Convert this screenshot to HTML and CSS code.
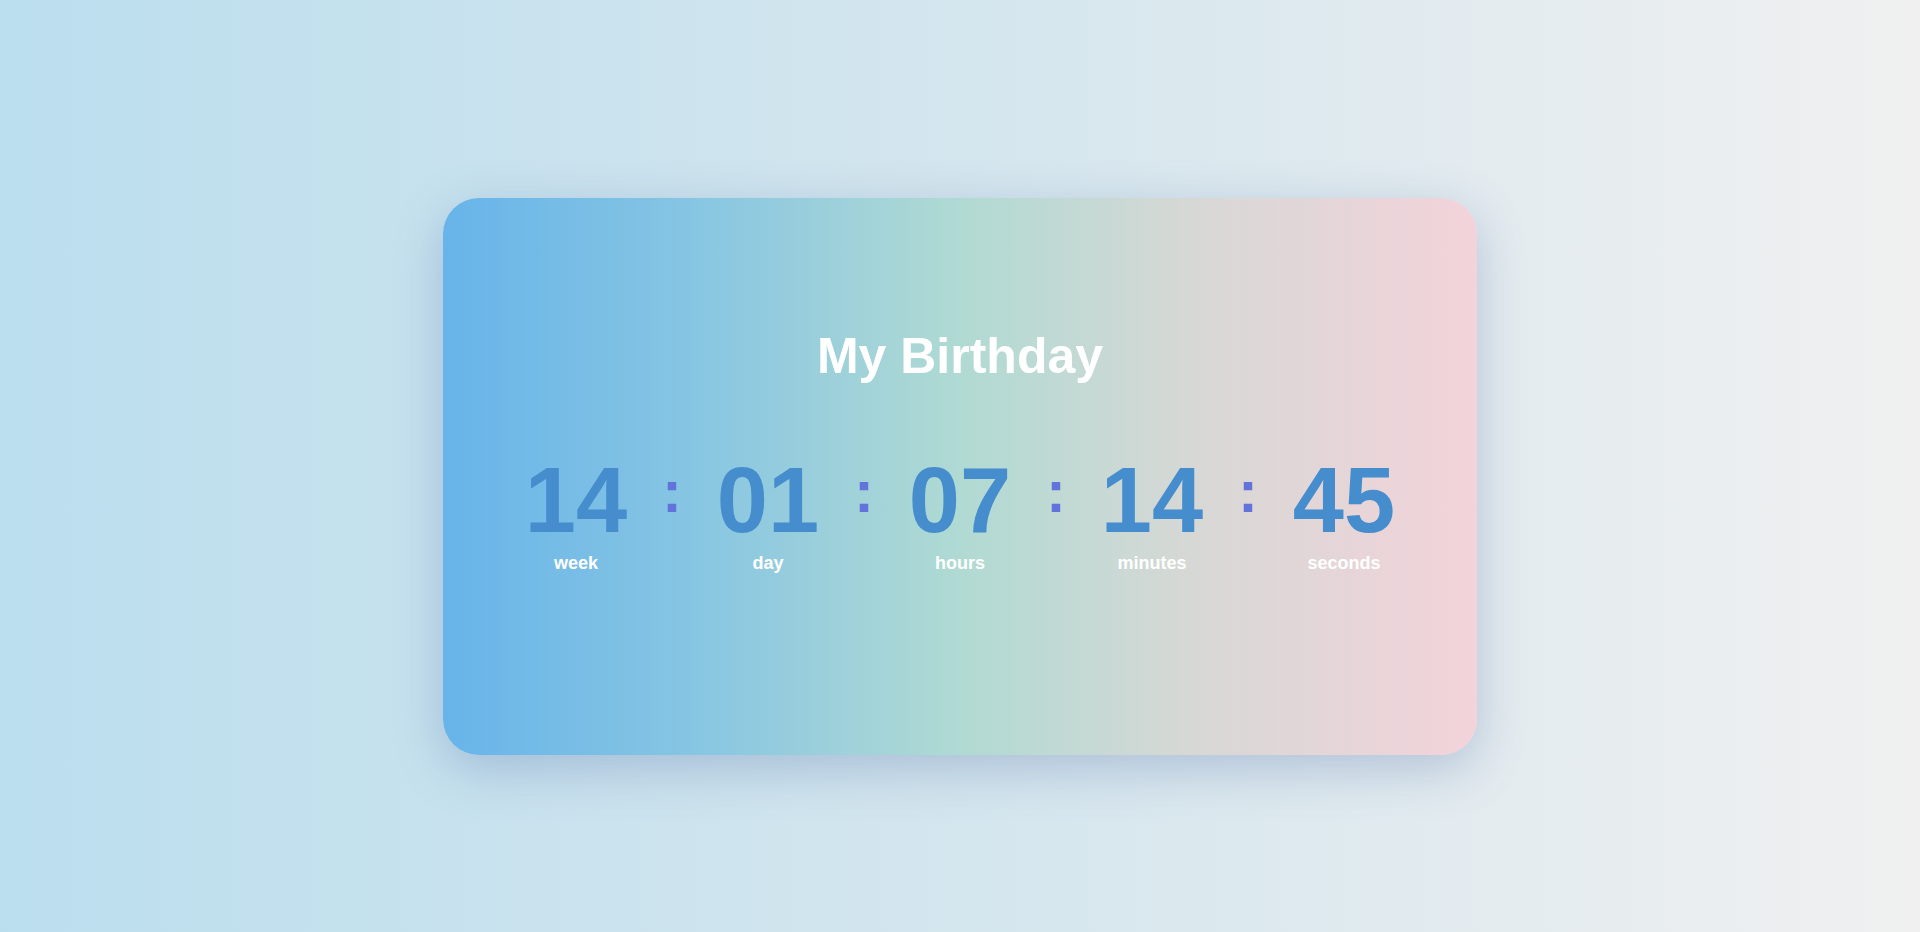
FILE: index.html
```html
<!DOCTYPE html>
<html lang="en">
<head>
<meta charset="utf-8">
<title>My Birthday</title>
<link rel="stylesheet" href="styles.css">
</head>
<body>
<main class="page">
  <section class="card">
    <h1 class="title">My Birthday</h1>
    <div class="timer">
      <div class="unit"><span class="num">14</span><span class="label">week</span></div>
      <div class="sep">:</div>
      <div class="unit"><span class="num">01</span><span class="label">day</span></div>
      <div class="sep">:</div>
      <div class="unit"><span class="num">07</span><span class="label">hours</span></div>
      <div class="sep">:</div>
      <div class="unit"><span class="num">14</span><span class="label">minutes</span></div>
      <div class="sep">:</div>
      <div class="unit"><span class="num">45</span><span class="label">seconds</span></div>
    </div>
  </section>
</main>
</body>
</html>
```

FILE: styles.css
```css
* { box-sizing: border-box; }
html, body { margin: 0; padding: 0; }
body {
  font-family: "Liberation Sans", Arial, sans-serif;
  background: linear-gradient(to right, #bbdeee 0%, #d4e6ee 50%, #f0f0f0 100%);
  min-height: 100vh;
}
.page {
  min-height: 100vh;
  display: flex;
  align-items: center;
  justify-content: center;
  padding-top: 21px;
}
.card {
  width: 1034px;
  height: 557px;
  border-radius: 36px;
  background: linear-gradient(to right, #67b4ea 0%, #88c6e2 25%, #b0dad3 50%, #d6d8d5 72%, #f3d3da 100%);
  box-shadow: 0 14px 50px rgba(80, 110, 165, 0.32);
  padding-top: 134px;
  display: flex;
  flex-direction: column;
  align-items: center;
}
.title {
  margin: 0;
  font-size: 50px;
  line-height: 48px;
  font-weight: 700;
  color: #ffffff;
}
.timer {
  margin-top: 74px;
  display: grid;
  grid-template-columns: 140px 52px 140px 52px 140px 52px 140px 52px 140px;
  align-items: start;
}
.unit {
  display: flex;
  flex-direction: column;
  align-items: center;
}
.num {
  font-size: 92px;
  line-height: 92px;
  font-weight: 700;
  color: #468dcd;
}
.label {
  margin-top: 8px;
  font-size: 18px;
  line-height: 18px;
  font-weight: 700;
  color: #ffffff;
}
.sep {
  text-align: center;
  font-size: 60px;
  line-height: 60px;
  font-weight: 700;
  color: #6373dc;
  margin-top: 8px;
}
```
